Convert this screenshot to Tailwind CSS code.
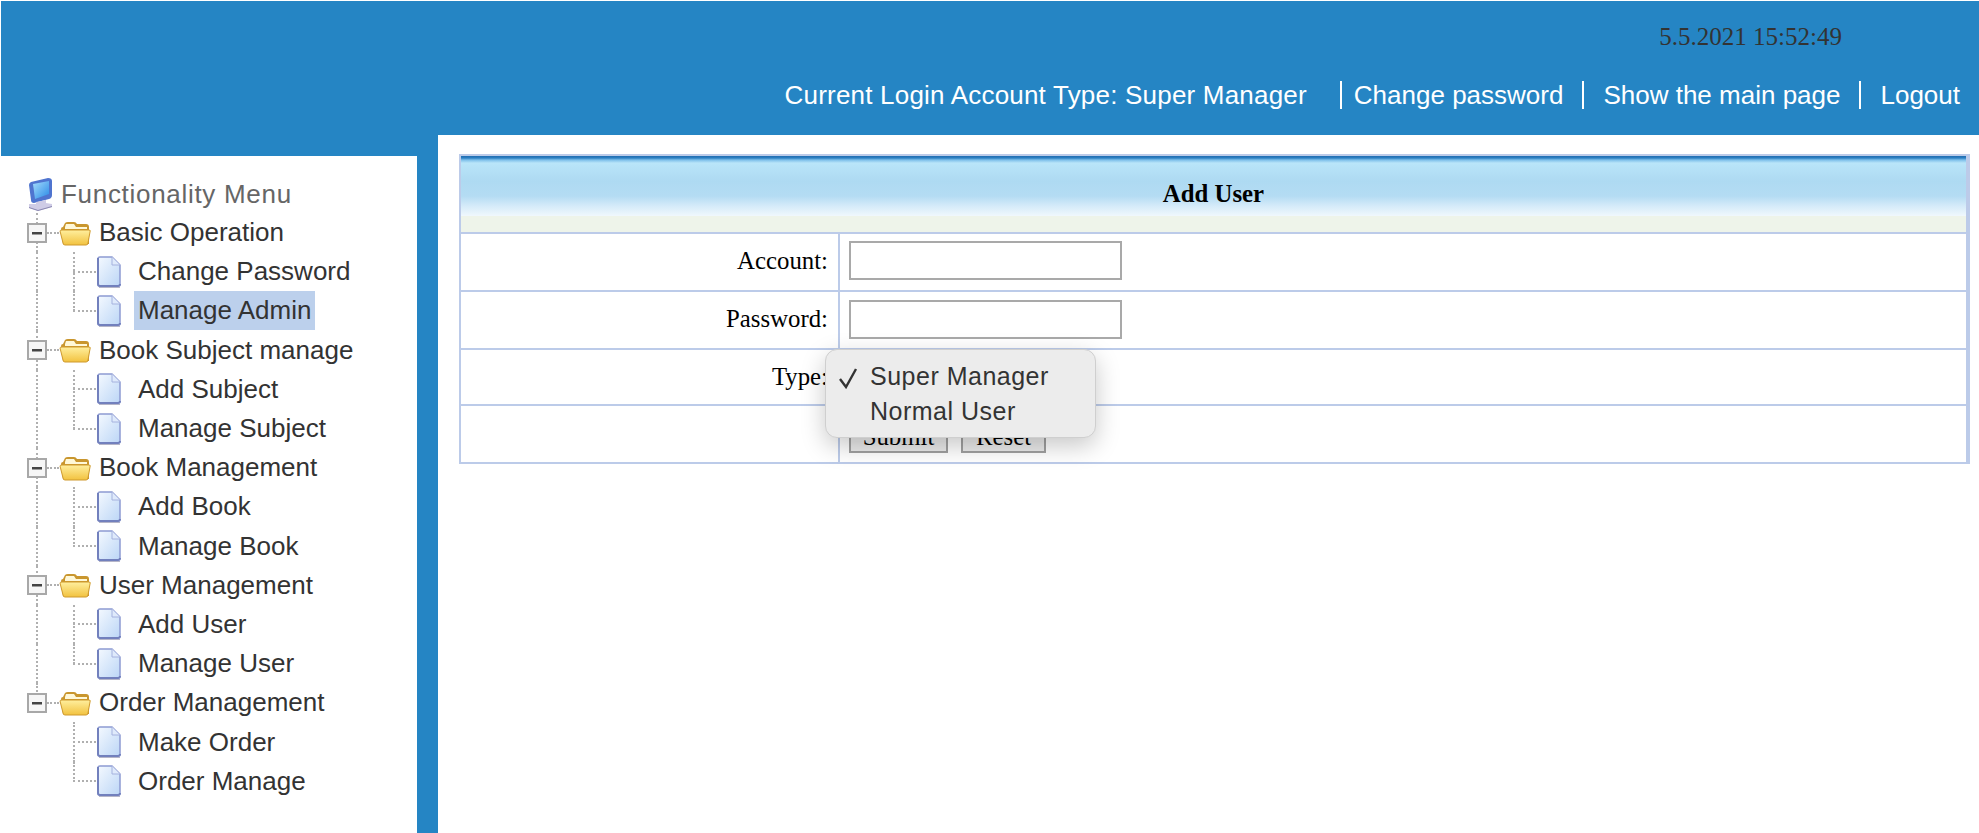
<!DOCTYPE html>
<html lang="en">
<head>
    <meta charset="UTF-8">
    <title>Add User</title>
    <script src="https://cdn.jsdelivr.net/npm/@tailwindcss/browser@4"></script>
</head>
<body class="bg-white h-[833px] overflow-hidden pl-[1px] pt-[1px] font-['Liberation_Sans',sans-serif]">
    <svg class="absolute w-0 h-0">
        <defs>
            <linearGradient id="folderFill" x1="0" y1="0" x2="0" y2="1"><stop offset="0" stop-color="#ffef9e"/><stop offset="1" stop-color="#f2c23f"/></linearGradient>
            <linearGradient id="pageFill" x1="0" y1="0" x2="1" y2="1"><stop offset="0" stop-color="#f4f9ff"/><stop offset="1" stop-color="#bcd6f6"/></linearGradient>
            <linearGradient id="screenFill" x1="0" y1="0" x2="1" y2="1"><stop offset="0" stop-color="#a5dcfc"/><stop offset="1" stop-color="#2a8ae6"/></linearGradient>
        </defs>
        <symbol id="computer" viewBox="0 0 26 33">
            <path d="M4 4 L21 0 Q25 0 25 3 L25 17 Q25 20 22 21 L7 25 Q4 25 4 22 L2 7 Q2 5 4 4Z" fill="#4f74cf"/>
            <path d="M6 6 L22 3 L22 16 L8 21Z" fill="url(#screenFill)"/>
            <path d="M9 24 L19 22 L19 25 L25 26 L25 29 L11 33 L2 30 L2 26 L9 26Z" fill="#cfcce6"/>
            <path d="M2 29 L11 32 L25 28 L25 29 L11 33 L2 30Z" fill="#8a86b0"/>
        </symbol>
        <symbol id="folder" viewBox="0 0 32 26">
            <path d="M4 24 L2 9 Q2 7 4 7 L6 3 Q7 2 9 2 L15 2 Q17 2 18 4 L27 4 Q30 4 30 7 L30 24Z" fill="#c9962e"/>
            <path d="M6 7 L7 4 L15 4 L17 7 L28 7 L28 9 L6 9Z" fill="#fff8d8"/>
            <path d="M1 11 Q1 10 3 10 L30 10 Q32 10 31 12 L29 23 Q29 25 27 25 L6 25 Q4 25 4 23Z" fill="url(#folderFill)" stroke="#cf9a2e" stroke-width="1"/>
        </symbol>
        <symbol id="page" viewBox="0 0 25 32">
            <path d="M2 3 Q2 1 4 1 L16 1 L24 9 L24 28 Q24 30 22 30 L4 30 Q2 30 2 28Z" fill="url(#pageFill)" stroke="#8d9bd2" stroke-width="1.5"/>
            <path d="M2 2 L2 28 Q2 30 4 30 L22 30 Q24 30 24 28" fill="none" stroke="#7280bd" stroke-width="2"/>
            <path d="M16 1 L16 9 L24 9" fill="#dfeafb" stroke="#a5b2de" stroke-width="1"/>
            <path d="M3 31.5 L24 31.5" stroke="#b5b5c8" stroke-width="1"/>
        </symbol>
        <symbol id="minus" viewBox="0 0 20 20">
            <rect x="1" y="1" width="18" height="18" fill="#f6f6f6" stroke="#a8a8a8" stroke-width="2"/>
            <rect x="5" y="9" width="10" height="2.5" fill="#444"/>
        </symbol>
    </svg>

    <header class="bg-[#2585c4] h-[134px] text-white">
        <div class="h-[70px] flex items-center justify-end pr-[137px] pt-[2px] font-['Liberation_Serif',serif] text-[25px] text-[#333]">5.5.2021 15:52:49</div>
        <nav class="h-[48px] flex items-center justify-end pr-[19px] text-[26px]">
            <span class="tracking-[0.2px]">Current Login Account Type: Super Manager</span>
            <span class="w-[2px] h-[28px] bg-white ml-[33px] mr-[12px]"></span>
            <a href="#">Change password</a>
            <span class="w-[2px] h-[28px] bg-white mx-[19px]"></span>
            <a href="#">Show the main page</a>
            <span class="w-[2px] h-[28px] bg-white mx-[19px]"></span>
            <a href="#">Logout</a>
        </nav>
    </header>

    <div class="flex h-[698px]">
        <aside class="w-[437px] shrink-0 bg-[#2585c4] pt-[21px] pr-[21px]">
            <div class="bg-white h-full pl-[26px] pt-[19px] text-[26px] text-[#333]">
                <div class="h-[38px] flex items-center text-[#666]">
                    <svg class="w-[26px] h-[33px] mr-[8px]"><use href="#computer"/></svg>
                    <span class="tracking-[0.7px]">Functionality Menu</span>
                </div>

                <div class="h-[39.2px] flex items-center relative">
                    <span class="absolute left-[9px] top-0 bottom-0 border-l-2 border-dotted border-[#b0b0b0]"></span>
                    <svg class="w-[20px] h-[20px] relative"><use href="#minus"/></svg>
                    <span class="w-[12px] border-t-2 border-dotted border-[#b0b0b0]"></span>
                    <svg class="w-[32px] h-[26px]"><use href="#folder"/></svg>
                    <span class="ml-[8px]">Basic Operation</span>
                </div>
                <div class="h-[39.2px] flex items-center relative">
                    <span class="absolute left-[9px] top-0 bottom-0 border-l-2 border-dotted border-[#b0b0b0]"></span>
                    <span class="absolute left-[46px] top-0 bottom-0 border-l-2 border-dotted border-[#b0b0b0]"></span>
                    <span class="ml-[46px] w-[23px] border-t-2 border-dotted border-[#b0b0b0]"></span>
                    <svg class="w-[25px] h-[32px]"><use href="#page"/></svg>
                    <span class="ml-[17px]">Change Password</span>
                </div>
                <div class="h-[39.2px] flex items-center relative">
                    <span class="absolute left-[9px] top-0 bottom-0 border-l-2 border-dotted border-[#b0b0b0]"></span>
                    <span class="absolute left-[46px] top-0 h-[20px] border-l-2 border-dotted border-[#b0b0b0]"></span>
                    <span class="ml-[46px] w-[23px] border-t-2 border-dotted border-[#b0b0b0]"></span>
                    <svg class="w-[25px] h-[32px]"><use href="#page"/></svg>
                    <span class="ml-[13px] px-[4px] bg-[#bcd0ec] h-[39px] leading-[39px]">Manage Admin</span>
                </div>

                <div class="h-[39.2px] flex items-center relative">
                    <span class="absolute left-[9px] top-0 bottom-0 border-l-2 border-dotted border-[#b0b0b0]"></span>
                    <svg class="w-[20px] h-[20px] relative"><use href="#minus"/></svg>
                    <span class="w-[12px] border-t-2 border-dotted border-[#b0b0b0]"></span>
                    <svg class="w-[32px] h-[26px]"><use href="#folder"/></svg>
                    <span class="ml-[8px]">Book Subject manage</span>
                </div>
                <div class="h-[39.2px] flex items-center relative">
                    <span class="absolute left-[9px] top-0 bottom-0 border-l-2 border-dotted border-[#b0b0b0]"></span>
                    <span class="absolute left-[46px] top-0 bottom-0 border-l-2 border-dotted border-[#b0b0b0]"></span>
                    <span class="ml-[46px] w-[23px] border-t-2 border-dotted border-[#b0b0b0]"></span>
                    <svg class="w-[25px] h-[32px]"><use href="#page"/></svg>
                    <span class="ml-[17px]">Add Subject</span>
                </div>
                <div class="h-[39.2px] flex items-center relative">
                    <span class="absolute left-[9px] top-0 bottom-0 border-l-2 border-dotted border-[#b0b0b0]"></span>
                    <span class="absolute left-[46px] top-0 h-[20px] border-l-2 border-dotted border-[#b0b0b0]"></span>
                    <span class="ml-[46px] w-[23px] border-t-2 border-dotted border-[#b0b0b0]"></span>
                    <svg class="w-[25px] h-[32px]"><use href="#page"/></svg>
                    <span class="ml-[17px]">Manage Subject</span>
                </div>

                <div class="h-[39.2px] flex items-center relative">
                    <span class="absolute left-[9px] top-0 bottom-0 border-l-2 border-dotted border-[#b0b0b0]"></span>
                    <svg class="w-[20px] h-[20px] relative"><use href="#minus"/></svg>
                    <span class="w-[12px] border-t-2 border-dotted border-[#b0b0b0]"></span>
                    <svg class="w-[32px] h-[26px]"><use href="#folder"/></svg>
                    <span class="ml-[8px]">Book Management</span>
                </div>
                <div class="h-[39.2px] flex items-center relative">
                    <span class="absolute left-[9px] top-0 bottom-0 border-l-2 border-dotted border-[#b0b0b0]"></span>
                    <span class="absolute left-[46px] top-0 bottom-0 border-l-2 border-dotted border-[#b0b0b0]"></span>
                    <span class="ml-[46px] w-[23px] border-t-2 border-dotted border-[#b0b0b0]"></span>
                    <svg class="w-[25px] h-[32px]"><use href="#page"/></svg>
                    <span class="ml-[17px]">Add Book</span>
                </div>
                <div class="h-[39.2px] flex items-center relative">
                    <span class="absolute left-[9px] top-0 bottom-0 border-l-2 border-dotted border-[#b0b0b0]"></span>
                    <span class="absolute left-[46px] top-0 h-[20px] border-l-2 border-dotted border-[#b0b0b0]"></span>
                    <span class="ml-[46px] w-[23px] border-t-2 border-dotted border-[#b0b0b0]"></span>
                    <svg class="w-[25px] h-[32px]"><use href="#page"/></svg>
                    <span class="ml-[17px]">Manage Book</span>
                </div>

                <div class="h-[39.2px] flex items-center relative">
                    <span class="absolute left-[9px] top-0 bottom-0 border-l-2 border-dotted border-[#b0b0b0]"></span>
                    <svg class="w-[20px] h-[20px] relative"><use href="#minus"/></svg>
                    <span class="w-[12px] border-t-2 border-dotted border-[#b0b0b0]"></span>
                    <svg class="w-[32px] h-[26px]"><use href="#folder"/></svg>
                    <span class="ml-[8px]">User Management</span>
                </div>
                <div class="h-[39.2px] flex items-center relative">
                    <span class="absolute left-[9px] top-0 bottom-0 border-l-2 border-dotted border-[#b0b0b0]"></span>
                    <span class="absolute left-[46px] top-0 bottom-0 border-l-2 border-dotted border-[#b0b0b0]"></span>
                    <span class="ml-[46px] w-[23px] border-t-2 border-dotted border-[#b0b0b0]"></span>
                    <svg class="w-[25px] h-[32px]"><use href="#page"/></svg>
                    <span class="ml-[17px]">Add User</span>
                </div>
                <div class="h-[39.2px] flex items-center relative">
                    <span class="absolute left-[9px] top-0 bottom-0 border-l-2 border-dotted border-[#b0b0b0]"></span>
                    <span class="absolute left-[46px] top-0 h-[20px] border-l-2 border-dotted border-[#b0b0b0]"></span>
                    <span class="ml-[46px] w-[23px] border-t-2 border-dotted border-[#b0b0b0]"></span>
                    <svg class="w-[25px] h-[32px]"><use href="#page"/></svg>
                    <span class="ml-[17px]">Manage User</span>
                </div>

                <div class="h-[39.2px] flex items-center relative">
                    <span class="absolute left-[9px] top-0 h-[20px] border-l-2 border-dotted border-[#b0b0b0]"></span>
                    <svg class="w-[20px] h-[20px] relative"><use href="#minus"/></svg>
                    <span class="w-[12px] border-t-2 border-dotted border-[#b0b0b0]"></span>
                    <svg class="w-[32px] h-[26px]"><use href="#folder"/></svg>
                    <span class="ml-[8px]">Order Management</span>
                </div>
                <div class="h-[39.2px] flex items-center relative">
                    <span class="absolute left-[46px] top-0 bottom-0 border-l-2 border-dotted border-[#b0b0b0]"></span>
                    <span class="ml-[46px] w-[23px] border-t-2 border-dotted border-[#b0b0b0]"></span>
                    <svg class="w-[25px] h-[32px]"><use href="#page"/></svg>
                    <span class="ml-[17px]">Make Order</span>
                </div>
                <div class="h-[39.2px] flex items-center relative">
                    <span class="absolute left-[46px] top-0 h-[20px] border-l-2 border-dotted border-[#b0b0b0]"></span>
                    <span class="ml-[46px] w-[23px] border-t-2 border-dotted border-[#b0b0b0]"></span>
                    <svg class="w-[25px] h-[32px]"><use href="#page"/></svg>
                    <span class="ml-[17px]">Order Manage</span>
                </div>
            </div>
        </aside>

        <main class="flex-1 bg-white pt-[19px] pl-[21px] pr-[9px] font-['Liberation_Serif',serif] text-[24.8px] text-black">
            <div class="relative border-2 border-r-4 border-[#bccbe9]">
                <div class="h-[76px] flex items-center justify-center font-bold bg-[linear-gradient(to_bottom,#1f6db0_0px,#2c7fc2_2px,#7fc0ea_4px,#b9e5f9_7px,#aedaf2_25px,#b4dcf3_40px,#d5ebf9_50px,#f0f8fd_60px,#eef4ea_60px,#eef4ea_76px)]">Add User</div>
                <div class="flex h-[58px] border-t-2 border-[#bccbe9]">
                    <div class="w-[379px] shrink-0 flex items-center justify-end pr-[10px] pb-[2px] border-r-2 border-[#bccbe9]">Account:</div>
                    <div class="flex items-center pl-[9px] pb-[3px]"><input type="text" class="w-[273px] h-[39px] border-2 border-[#a9a9a9] bg-white"></div>
                </div>
                <div class="flex h-[58px] border-t-2 border-[#bccbe9]">
                    <div class="w-[379px] shrink-0 flex items-center justify-end pr-[10px] pb-[2px] border-r-2 border-[#bccbe9]">Password:</div>
                    <div class="flex items-center pl-[9px] pb-[1px]"><input type="password" class="w-[273px] h-[39px] border-2 border-[#a9a9a9] bg-white"></div>
                </div>
                <div class="flex h-[56px] border-t-2 border-[#bccbe9]">
                    <div class="w-[379px] shrink-0 flex items-center justify-end pr-[10px] border-r-2 border-[#bccbe9]">Type:</div>
                    <div></div>
                </div>
                <div class="flex h-[58px] border-t-2 border-[#bccbe9]">
                    <div class="w-[379px] shrink-0 border-r-2 border-[#bccbe9]"></div>
                    <div class="flex items-center gap-[13px] pl-[9px]">
                        <button class="w-[99px] h-[37px] border-2 border-[#a0a0a0] bg-[#ebebeb] pb-[4px]">Submit</button>
                        <button class="w-[85px] h-[37px] border-2 border-[#a0a0a0] bg-[#ebebeb] pb-[4px]">Reset</button>
                    </div>
                </div>

                <div class="absolute left-[364px] top-[193px] w-[271px] h-[89px] rounded-[12px] bg-[#ececec] border border-[#cfcfcf] shadow-[0_8px_24px_rgba(0,0,0,0.22)] font-['Liberation_Sans',sans-serif] text-[25px] text-[#333] pt-[9px]">
                    <div class="h-[35px] flex items-center relative pl-[44px] tracking-[0.5px]">
                        <svg class="absolute left-[12px] top-[8px] w-[20px] h-[22px]" viewBox="0 0 20 22" fill="none" stroke="#333" stroke-width="2.4"><path d="M2 12 L8 20 L18 2"/></svg>
                        Super Manager
                    </div>
                    <div class="h-[35px] flex items-center pl-[44px] tracking-[0.5px]">Normal User</div>
                </div>
            </div>
        </main>
    </div>
</body>
</html>
